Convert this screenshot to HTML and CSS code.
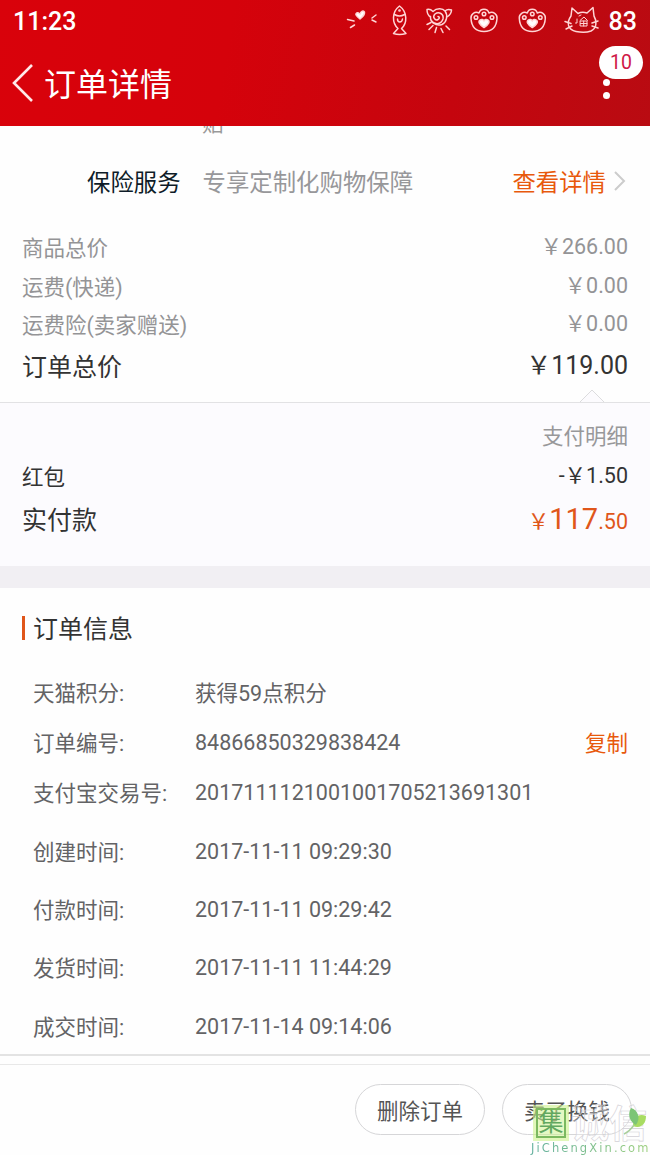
FILE: index.html
```html
<!DOCTYPE html>
<html lang="zh-CN">
<head>
    <meta charset="UTF-8">
    <title>订单详情</title>
    <link rel="stylesheet" href="styles.css">
</head>
<body>
    <header class="header">
        <div class="status-bar">
            <span class="clock">11:23</span>
            <svg class="status-icons" width="256" height="40" viewBox="0 0 256 40">
                <!-- wink -->
                <path class="solid" d="M15 18c-4-3-5-5-3.500-6 1.500-1 2.500 0 3.500 1 1-3 3.500-4 4.500-2 .5 3-2 5-4.500 7z"/>
                <path d="M2.500 18.500l6.500 1.500M5.500 26.500l4-2.500M31 14l-4 3M27 19l4 2"/>
                <!-- fish -->
                <path d="M54.500 5c-8 6-7.500 17-1.500 22.500l-4.500 5c4 1.500 8 1.500 12.500 0l-4.500-5c6-5.500 6-16.500-2-22.500zM49.500 13.500q5 3 10 0M52.500 18c0 4 4.500 4 5 0"/>
                <circle cx="54.500" cy="9.500" r=".6"/>
                <!-- curly sheep -->
                <path d="M88 10.500c-2-2-4-2.500-6-2 0 3 1 6 3.500 7.500M100 10c2-2 4-2 6.500-1 0 3-1.500 5-4.500 7M88 10.500c4-4 10-3 12-.5 3 4 2 11-3 13.500-6 2-12-2-11.500-8M86 19c3 5 10 5 12-1 1-5-4-8-8-5-3 3 0 7 3 5.500 2-1 1.500-3 0-3"/>
                <path d="M82 23.500l4-2M84 28.500l4-4M90 31.500l1.500-5M96 27.500l2 4M101 25l3.500 3.500"/>
                <!-- paws -->
                <g id="paw">
                    <path d="M134 12c1.500-5 8.500-5 10 0 4-2 8.500 1 8 5.500-.5 8-5 13-13 13s-12.500-5-13-13c-.5-4.500 4-7.500 8-5.500z"/>
                    <circle cx="131" cy="16.500" r="1.800"/><circle cx="139" cy="13" r="1.800"/><circle cx="147" cy="16.500" r="1.800"/>
                    <path class="solid" d="M139 26.500c-5-3-6-6-4-7.500 1.500-1 3.500-.5 4 1 .5-1.500 2.500-2 4-1 2 1.500 1 4.500-4 7.500z"/>
                </g>
                <use href="#paw" x="48.300"/>
                <!-- cat -->
                <path d="M227 7l-1 8c-5 7-3 14 5 15.500 5 1 11 1 15-.5 6-3 6-10 3-15l-1-8.500-6 5.500q-5-1.500-9 .5z"/>
                <path d="M220 20.500l6 2M221 28l6-3M247 22l6-2M247 25l6 2"/>
                <path class="thin" d="M235.500 20h6.500v5h-6.500zM238.700 20v5M235.500 22.500h6.500M235 19.500l4-3.500 3.500 3.500M232 18v4h-1.500M234 15l2-1"/>
            </svg>
            <span class="battery">83</span>
        </div>
        <div class="title-bar">
            <svg class="back" width="24" height="40" viewBox="0 0 24 40"><path d="M22 2L4 20L22 38"/></svg>
            <h1>订单详情</h1>
            <div class="more">
                <i></i><i></i><i></i>
                <span class="badge">10</span>
            </div>
        </div>
    </header>

    <main class="content">
        <div class="clipped"><span>贴</span></div>
        <div class="insurance">
            <span class="insurance-name">保险服务</span>
            <span class="insurance-desc">专享定制化购物保障</span>
            <span class="insurance-link">查看详情</span>
            <svg width="13" height="22" viewBox="0 0 13 22"><path d="M2 2l9 9-9 9"/></svg>
        </div>

        <section class="prices">
            <div class="row"><span class="label">商品总价</span><span>&#xFFE5;266.00</span></div>
            <div class="row"><span class="label">运费(快递)</span><span>&#xFFE5;0.00</span></div>
            <div class="row"><span class="label">运费险(卖家赠送)</span><span>&#xFFE5;0.00</span></div>
            <div class="row total"><span class="label">订单总价</span><span>&#xFFE5;119.00</span></div>
        </section>

        <section class="payment">
            <svg class="notch" width="26" height="14" viewBox="0 0 26 14"><path d="M1 13L13 1L25 13"/></svg>
            <div class="row detail"><span></span><span>支付明细</span></div>
            <div class="row"><span class="label">红包</span><span>-&#xFFE5;1.50</span></div>
            <div class="row paid"><span class="label">实付款</span><span class="amount">&#xFFE5;<b>117</b>.50</span></div>
        </section>

        <section class="info">
            <h2>订单信息</h2>
            <div class="info-row short"><span>天猫积分:</span><span class="points">获得59点积分</span></div>
            <div class="info-row short"><span>订单编号:</span><span>84866850329838424</span><a class="copy">复制</a></div>
            <div class="info-row short"><span>支付宝交易号:</span><span>2017111121001001705213691301</span></div>
            <div class="info-row"><span>创建时间:</span><span>2017-11-11 09:29:30</span></div>
            <div class="info-row"><span>付款时间:</span><span>2017-11-11 09:29:42</span></div>
            <div class="info-row"><span>发货时间:</span><span>2017-11-11 11:44:29</span></div>
            <div class="info-row"><span>成交时间:</span><span>2017-11-14 09:14:06</span></div>
        </section>
    </main>

    <footer class="footer">
        <button>删除订单</button>
        <button>卖了换钱</button>
    </footer>

    <div class="watermark">
        <div class="mark-top">
            <span class="mark-box">集</span>
            <span class="mark-text">诚信</span>
            <svg class="leaf" width="26" height="30" viewBox="0 0 26 30">
                <path class="leaf-light" d="M24 9c-7-3-13 1-13 10 8 3 13-2 13-10z"/>
                <path class="leaf-dark" d="M9 1c7 2 10 10 5 17-6-3-9-10-5-17z"/>
                <path class="stem" d="M12 18q-4 6-10 9"/>
            </svg>
        </div>
        <div class="mark-url">JiChengXin.com</div>
    </div>
</body>
</html>
```
FILE: styles.css
```css
* {
    box-sizing: border-box;
}
body {
    margin: 0;
    width: 650px;
    height: 1155px;
    position: relative;
    overflow: hidden;
    background: #fefefe;
    font-family: Roboto, "Noto Sans CJK SC", sans-serif;
    font-size: 21.5px;
    color: #636365;
    display: flex;
    flex-direction: column;
}
h1, h2 {
    margin: 0;
    font-weight: 400;
}
svg {
    fill: none;
    flex: none;
}

/* header */
.header {
    height: 126px;
    flex: none;
    background: linear-gradient(100deg, #d9020b 0%, #d5020b 35%, #c5050e 70%, #b90b12 100%);
    color: #fff;
}
.status-bar {
    height: 42px;
    padding: 0 13px;
    display: flex;
    align-items: center;
    font-size: 25px;
    font-weight: 500;
}
.status-icons {
    margin-left: auto;
    stroke: #ffd5d5;
    stroke-width: 1.5;
    stroke-linecap: round;
    stroke-linejoin: round;
}
.status-icons .solid {
    fill: #fff;
}
.status-icons .thin {
    stroke-width: 1;
}
.battery {
    margin-left: 8px;
}
.title-bar {
    height: 84px;
    padding: 0 39px 2px 10px;
    display: flex;
    align-items: center;
}
.back {
    stroke: #ffe9e9;
    stroke-width: 2.6;
}
.title-bar h1 {
    margin-left: 10px;
    padding-top: 3px;
    font-size: 32px;
    line-height: 44px;
}
.more {
    position: relative;
    margin-left: auto;
    width: 10px;
    display: flex;
    flex-direction: column;
    align-items: center;
    gap: 6px;
}
.more i {
    width: 7px;
    height: 7px;
    border-radius: 50%;
    background: #fff;
}
.more i:first-child {
    margin-top: -2px;
}
.badge {
    position: absolute;
    left: -2px;
    top: -22px;
    width: 44px;
    height: 33px;
    border-radius: 17px;
    background: #fff;
    color: #cf1747;
    font-size: 19.5px;
    line-height: 33px;
    text-align: center;
}

/* insurance */
.clipped {
    height: 24px;
    padding-left: 202px;
    overflow: hidden;
    color: #999;
}
.clipped span {
    display: block;
    margin-top: -16px;
    line-height: 28px;
}
.insurance {
    height: 64px;
    padding: 0 24px 3px 87px;
    display: flex;
    align-items: center;
    font-size: 23.4px;
}
.insurance-name {
    color: #0e1c28;
}
.insurance-desc {
    margin-left: 22px;
    color: #97979a;
}
.insurance-link {
    margin-left: auto;
    margin-right: 7px;
    color: #e8590c;
}
.insurance svg {
    stroke: #ccc;
    stroke-width: 2;
}

/* prices */
.prices {
    height: 188px;
    padding: 14px 22px 0;
    color: #949496;
}
.row {
    display: flex;
    justify-content: space-between;
    height: 38.5px;
    line-height: 38.5px;
}
.label {
    padding-top: 2px;
}
.total {
    height: 44px;
    line-height: 44px;
    font-size: 25px;
    color: #333;
}
.payment {
    position: relative;
    height: 164px;
    padding: 15px 22px 0;
    border-top: 1px solid #e2e2e4;
    background: #fcfbfe;
    color: #333;
}
.notch {
    position: absolute;
    left: 579px;
    top: -14px;
    stroke: #dcdcde;
    fill: #fcfbfe;
}
.detail {
    color: #98989a;
}
.paid {
    height: 48px;
    line-height: 48px;
    font-size: 25px;
}
.amount {
    font-size: 21.5px;
    color: #e0561a;
}
.amount b {
    font-size: 29px;
    font-weight: 400;
}

/* order info */
.info {
    border-top: 22px solid #f1eff3;
    padding: 24px 22px 0;
    height: 488px;
}
.info h2 {
    border-left: 3px solid #e0561a;
    margin: 4px 0 27px;
    padding-left: 8px;
    height: 24px;
    line-height: 27px;
    font-size: 25px;
    color: #333;
}
.info-row {
    height: 58.4px;
    padding-left: 11px;
    display: flex;
    align-items: center;
}
.info-row span:first-child {
    width: 162px;
    padding-bottom: 2px;
}
.info-row.short {
    height: 50px;
}
.info-row.short + .info-row:not(.short) {
    margin-top: 5px;
}
.points {
    padding-bottom: 2px;
}
.copy {
    margin-left: auto;
    padding-bottom: 2px;
    color: #e8590c;
}

/* footer */
.footer {
    height: 101px;
    border-top: 2px solid #e3e3e3;
    padding: 28px 18px 0;
    display: flex;
    justify-content: flex-end;
    gap: 17px;
    background: linear-gradient(#fefefe 8px, #e8e8e8 8px, #e8e8e8 9px, #fefefe 9px);
}
.footer button {
    width: 130px;
    height: 51px;
    padding: 0 0 1px;
    border: 1px solid #d6d6d8;
    border-radius: 26px;
    background: #fff;
    font: inherit;
    color: #555;
}

/* site mark over the bottom corner */
.watermark {
    position: absolute;
    left: 530px;
    top: 1105px;
    width: 120px;
}
.mark-top {
    position: relative;
    display: flex;
    height: 37px;
    padding: 3px 0 0 6px;
}
.mark-box {
    width: 30px;
    height: 30px;
    border: 2px solid #7cb960;
    outline: 3px solid rgba(205, 242, 140, 0.6);
    background: rgba(205, 242, 145, 0.55);
    color: #62a860;
    font-size: 25px;
    line-height: 26px;
    text-align: center;
}
.mark-text {
    margin-left: 5px;
    font-size: 38px;
    line-height: 32px;
    font-weight: 700;
    color: rgba(255, 255, 255, 0.3);
    -webkit-text-stroke: 0.6px #d3d0d6;
}
.leaf {
    position: absolute;
    right: 2px;
    top: 2px;
}
.leaf-dark {
    fill: #7cc576;
}
.leaf-light {
    fill: #a8dc62;
}
.stem {
    stroke: #a9cf9c;
    stroke-width: 1.5;
}
.mark-url {
    padding-left: 1px;
    font-family: "DejaVu Sans", sans-serif;
    font-size: 11.5px;
    line-height: 13px;
    letter-spacing: 2.1px;
    white-space: nowrap;
    background: linear-gradient(90deg, #5fae9c, #9ccf7c);
    -webkit-background-clip: text;
    color: transparent;
}
```
